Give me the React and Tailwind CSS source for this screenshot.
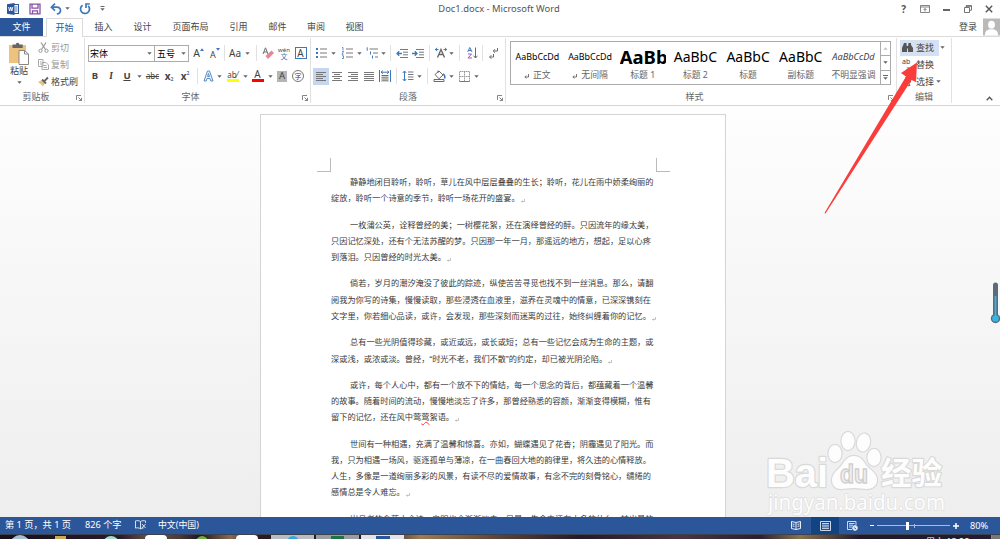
import clsx from "clsx";

const tabs = [
  { name: "插入", width: "w-[39px]" },
  { name: "设计", width: "w-[39px]" },
  { name: "页面布局", width: "w-[57px]" },
  { name: "引用", width: "w-[39px]" },
  { name: "邮件", width: "w-[39px]" },
  { name: "审阅", width: "w-[38px]" },
  { name: "视图", width: "w-[39px]" },
];

const styles = [
  { sample: "AaBbCcDd", name: "正文", mark: true, cls: "text-[8.9px] text-black" },
  { sample: "AaBbCcDd", name: "无间隔", mark: true, cls: "text-[8.9px] text-black" },
  { sample: "AaBb", name: "标题 1", cls: "text-[18.5px] font-bold text-black" },
  { sample: "AaBbC", name: "标题 2", cls: "text-[14px] text-black" },
  { sample: "AaBbC", name: "标题", cls: "text-[14px] text-black" },
  { sample: "AaBbC", name: "副标题", cls: "text-[14px] text-black" },
  { sample: "AaBbCcDd", name: "不明显强调", cls: "text-[9.2px] italic text-[#444]" },
];

const paragraphs = [
  [
    "静静地闭目聆听，聆听，草儿在风中层层叠叠的生长；聆听，花儿在雨中娇柔绚丽的",
    "绽放，聆听一个诗意的季节，聆听一场花开的盛宴。",
  ],
  [
    "一枚蒲公英，诠释曾经的美；一树樱花絮，还在演绎曾经的醉。只因流年的缘太美，",
    "只因记忆深处，还有个无法苏醒的梦。只因那一年一月，那遥远的地方，想起，足以心疼",
    "到落泪。只因曾经的时光太美。",
  ],
  [
    "倘若，岁月的潮汐淹没了彼此的踪迹，纵使苦苦寻觅也找不到一丝消息。那么，请翻",
    "阅我为你写的诗集，慢慢读取，那些浸透在血液里，滋养在灵魂中的情意，已深深镌刻在",
    "文字里，你若细心品读，或许，会发现，那些深刻而迷离的过往，始终纠缠着你的记忆。",
  ],
  [
    "总有一些光阴值得珍藏，或近或远，或长或短；总有一些记忆会成为生命的主题，或",
    "深或浅，或浓或淡。曾经，“时光不老，我们不散”的约定，却已被光阴沦陷。",
  ],
  [
    "或许，每个人心中，都有一个放不下的情结，每一个思念的背后，都蕴藏着一个温馨",
    "的故事。随着时间的流动，慢慢地淡忘了许多，那曾经熟悉的容颜，渐渐变得模糊，惟有",
    "留下的记忆，还在风中莺莺絮语。",
  ],
  [
    "世间有一种相遇，充满了温馨和惊喜。亦如，蝴蝶遇见了花香；阴霾遇见了阳光。而",
    "我，只为相遇一场风，驱逐孤单与薄凉，在一曲春回大地的韵律里，将久违的心情释放。",
    "人生，多像是一道绚丽多彩的风景，有读不尽的爱情故事，有念不完的刻骨铭心，缱绻的",
    "感情总是令人难忘。",
  ],
  ["岁月老的念落土会诗，自明也会渐渐淡去，只是，生命中还有太多的什么，转出最的"],
];

const Caret = ({ className = "" }) => (
  <svg viewBox="0 0 5 3" className={clsx("h-[3px] w-[5px] shrink-0", className)}>
    <path d="M0.3 0.2h4.4L2.5 2.8z" fill="#666" />
  </svg>
);

// one slot of a ribbon row, the glyph sits in the middle
const Cell = ({ w, className, children }) => (
  <div className={clsx("flex h-full shrink-0 items-center justify-center", w, className)}>
    {children}
  </div>
);

const Sep = ({ w }) => (
  <Cell w={w}>
    <div className="h-4 w-px bg-[#e1e1e1]" />
  </Cell>
);

const Icon = ({ w = 13, h = 13, children }) => (
  <svg
    width={w}
    height={h}
    viewBox={`0 0 ${w} ${h}`}
    fill="none"
    stroke="#6a6a6a"
    className="shrink-0"
  >
    {children}
  </svg>
);

const Group = ({ w, label, launcher, children }) => (
  <div className={clsx("flex h-full shrink-0 flex-col border-r border-[#e1e1e1]", w)}>
    <div className="h-[53px]">{children}</div>
    <div className="relative flex h-[13px] items-center justify-center text-[#666]">
      {label}
      {launcher && (
        <svg viewBox="0 0 6 6" className="absolute right-[2px] top-[5px] h-[6px] w-[6px]" fill="none" stroke="#777">
          <path d="M0.5 5V0.5H5M2.5 2.5l3 3M5.5 2.8v2.7H2.8" strokeWidth="0.9" />
        </svg>
      )}
    </div>
  </div>
);

const Lines = ({ rows }) => (
  <Icon w={12} h={11}>
    {rows.map(([x, len], i) => (
      <path key={i} d={`M${x} ${1.5 + i * 2}h${len}`} strokeWidth="0.9" />
    ))}
  </Icon>
);

const TitleBar = () => (
  <div className="flex h-[18px] items-center pb-px text-[#555]">
    <div className="flex w-[300px] items-center pl-[7px]">
      <svg width="12" height="12" viewBox="0 0 12 12">
        <rect x="6" y="1.5" width="5.5" height="9" fill="#fff" stroke="#2b579a" />
        <path d="M8 4h2.5M8 6h2.5M8 8h2.5" stroke="#2b579a" strokeWidth="0.8" />
        <path d="M0 1.3L7.5 0v12L0 10.7z" fill="#2b579a" />
        <path d="M1.6 4l1 4 1.1-4 1.1 4 1-4" fill="none" stroke="#fff" strokeWidth="0.9" />
      </svg>
      <svg width="12" height="12" viewBox="0 0 12 12" className="ml-[10px]" fill="none" stroke="#8a50a8" strokeWidth="1.3">
        <path d="M1 1.2h10v9.6H1zM3 1.2v4h6v-4M3.5 10.5V7.8h5v2.7" />
      </svg>
      <svg width="12" height="12" viewBox="0 0 12 12" className="ml-[9px]" fill="none" stroke="#3e78b8" strokeWidth="1.7">
        <path d="M5 0.7L1.4 4.2 5 7.6M1.6 4.2h5.2c5 .2 4.8 6.4 0 6.8" />
      </svg>
      <Caret className="ml-[3px]" />
      <svg width="12" height="12" viewBox="0 0 12 12" className="ml-[9px]" fill="none" stroke="#3e78b8" strokeWidth="1.7">
        <path d="M3.6 2.2a4.5 4.5 0 1 0 5.6.6M10.8 1H7v4" />
      </svg>
      <svg width="5" height="5" viewBox="0 0 5 5" className="ml-[9px]">
        <path d="M0.5 0.5h4" stroke="#666" />
        <path d="M0.3 2.2h4.4L2.5 4.8z" fill="#666" />
      </svg>
    </div>
    <div className="w-[398px] text-center text-[9.4px]">Doc1.docx - Microsoft Word</div>
    <div className="flex flex-1 items-center justify-end pr-[7px]">
      <span className="text-[10px] font-bold">?</span>
      <svg width="10" height="8" viewBox="0 0 10 8" className="ml-[14px]" fill="none" stroke="#666">
        <path d="M.5.5h9v7h-9zM.5 2h9M5 6.5v-3M3.5 5L5 3.5 6.500 5" strokeWidth="0.8" />
      </svg>
      <div className="ml-[13px] mt-[3px] h-[1.500px] w-[7px] bg-[#666]" />
      <svg width="8" height="8" viewBox="0 0 8 8" className="ml-[14px]" fill="none" stroke="#666">
        <path d="M.5 2.500h5v5h-5zM2.200 2.200V.6h5.300v4.600H5.800M2 1.300h5.500" strokeWidth="0.9" />
      </svg>
      <svg width="8" height="8" viewBox="0 0 8 8" className="ml-[13px]" stroke="#555" strokeWidth="1.4">
        <path d="M.8.8l6.400 6.400M7.200.8L.8 7.200" />
      </svg>
    </div>
  </div>
);

const TabRow = () => (
  <div className="flex h-[19px] border-b border-[#dadada] text-[#444]">
    <div className="flex w-[43px] items-center justify-center bg-[#2b579a] pb-px text-white">文件</div>
    <div className="ml-[3px] -mb-px flex w-[37px] items-center justify-center border border-b-0 border-[#dadada] bg-white pb-[2px] text-[#2b579a]">
      开始
    </div>
    <div className="ml-px flex pb-px">
      {tabs.map((tab) => (
        <div key={tab.name} className={clsx("flex items-center justify-center", tab.width)}>
          {tab.name}
        </div>
      ))}
    </div>
    <div className="ml-auto flex items-center">
      <span className="mb-[2px]">登录</span>
      <svg width="17" height="18" viewBox="0 0 18 18" className="ml-[6px]">
        <rect width="18" height="18" fill="#b9b9b9" />
        <ellipse cx="9" cy="6.500" rx="3.600" ry="4.200" fill="#fff" />
        <path d="M2 18c0-5 3-6.500 7-6.500s7 1.500 7 6.500z" fill="#fff" />
      </svg>
    </div>
  </div>
);

const Clipboard = () => (
  <Group w="w-[85px]" label={<span className="mr-[12px]">剪贴板</span>} launcher>
    <div className="flex h-full">
      <div className="flex w-[38px] flex-col items-center pt-[4px]">
        <svg width="22" height="23" viewBox="0 0 22 23">
          <rect x="1" y="3" width="17" height="18" fill="#ecc27c" />
          <path d="M4.500 2.500h3.300a1.800 1.800 0 0 1 3.600 0h3.300V6H4.500z" fill="#666" />
          <path d="M11 8.500h5.500L20.500 12v10.500H11z" fill="#fff" stroke="#888" />
          <path d="M16.500 8.500V12h4" fill="none" stroke="#888" />
        </svg>
        <span className="leading-[12px]">粘贴</span>
        <Caret className="mt-[4px]" />
      </div>
      <div className="flex flex-col pt-px text-[#999]">
        <div className="flex h-[17px] items-center">
          <Icon w={11} h={11}>
            <path d="M3 .5l4.500 7M8 .5l-4.500 7" stroke="#999" strokeWidth="1.200" />
            <circle cx="2.500" cy="8.800" r="1.600" stroke="#999" />
            <circle cx="8.500" cy="8.800" r="1.600" stroke="#999" />
          </Icon>
          <span className="ml-[2px]">剪切</span>
        </div>
        <div className="flex h-[17px] items-center">
          <Icon w={11} h={11}>
            <path d="M.5.500h4.500v7H.5zM4 3.500h4L10.500 6v4.500H4z" fill="#fff" stroke="#aaa" />
            <path d="M5.500 6.500h3M5.500 8.500h3.500M2 3h1.500M2 5h1.500" stroke="#aaa" />
          </Icon>
          <span className="ml-[2px]">复制</span>
        </div>
        <div className="flex h-[17px] items-center text-[#444]">
          <Icon w={11} h={11}>
            <path d="M0 6l4-2 3 3-2 3.500c-1-1.500-3-3-5-4.500z" fill="#ecc27c" stroke="none" />
            <path d="M4 3.500l4 4M6.500 5L10 1.500" stroke="#666" strokeWidth="1.800" />
          </Icon>
          <span className="ml-[2px]">格式刷</span>
        </div>
      </div>
    </div>
  </Group>
);

const FontGroup = () => (
  <Group w="w-[226px]" label={<span className="mr-[14px]">字体</span>} launcher>
    <div className="flex h-[26px] items-center pl-[3px] pt-[4px]">
      <div className="flex h-[17px] w-[67px] items-center justify-between border border-[#ababab] pl-px pr-[2px] text-black">
        宋体 <Caret />
      </div>
      <div className="-ml-px flex h-[17px] w-[35px] items-center justify-between border border-[#ababab] pl-[2px] pr-[2px] text-black">
        五号 <Caret />
      </div>
      <Cell w="w-[17px]" className="ml-px">
        <span className="text-[10.500px]">A</span>
        <svg width="4" height="3" viewBox="0 0 4 3" className="mb-[8px]">
          <path d="M0 3h4L2 .3z" fill="#3e78b8" />
        </svg>
      </Cell>
      <Cell w="w-[16px]">
        <span className="mt-[2px] text-[9px]">A</span>
        <svg width="4" height="3" viewBox="0 0 4 3" className="mb-[8px]">
          <path d="M0 0h4L2 2.700z" fill="#3e78b8" />
        </svg>
      </Cell>
      <Sep w="w-[3px]" />
      <Cell w="w-[18px]" className="text-[10px]">Aa</Cell>
      <Cell w="w-[6px]"><Caret /></Cell>
      <Sep w="w-[12px]" />
      <Cell w="w-[12px]">
        <Icon w={12} h={12}>
          <path d="M1 7L3.500.8 6 7M2 5h3" />
          <path d="M3.500 9l6-5.500L12 6l-6 6z" fill="#e8849c" stroke="none" />
        </Icon>
      </Cell>
      <Cell w="w-[20px]">
        <div className="flex flex-col items-center">
          <span className="text-[6px] leading-[6px]">wén</span>
          <span className="text-[7px] leading-[7px] text-[#3e78b8]">文</span>
        </div>
      </Cell>
      <Cell w="w-[13px]">
        <div className="flex h-[12px] w-[12px] items-center justify-center border border-[#3e78b8] text-[10px]">A</div>
      </Cell>
    </div>
    <div className="mt-[2px] flex h-[20px] items-center pl-[2px]">
      <Cell w="w-[16px]" className="text-[9.500px] font-bold">B</Cell>
      <Cell w="w-[16px]" className="font-serif text-[10px] font-bold italic">I</Cell>
      <Cell w="w-[16px]" className="text-[9.500px] font-bold underline">U</Cell>
      <Cell w="w-[9px]"><Caret /></Cell>
      <Cell w="w-[17px]" className="text-[8px] line-through">abc</Cell>
      <Cell w="w-[16px]" className="text-[10px] font-bold">
        x<span className="mt-[6px] text-[5px] text-[#3e78b8]">2</span>
      </Cell>
      <Cell w="w-[16px]" className="text-[10px] font-bold">
        x<span className="mb-[6px] text-[5px] text-[#3e78b8]">2</span>
      </Cell>
      <Sep w="w-[8px]" />
      <Cell w="w-[14px]">
        <Icon w={11} h={12}>
          <path d="M1 11L4.500 1h2L10 11H7.800L7 8.500H4L3.200 11zM4.600 6.500h1.900L5.500 3.500z" stroke="#5b8fcb" fill="#eaf2fb" />
        </Icon>
      </Cell>
      <Cell w="w-[8px]"><Caret /></Cell>
      <Cell w="w-[19px]">
        <div className="w-[12px] border-b-[3px] border-[#ffff00] text-center text-[8px] leading-[8px]">ab⁄</div>
      </Cell>
      <Cell w="w-[6px]"><Caret /></Cell>
      <Cell w="w-[19px]">
        <div className="w-[12px] border-b-[3px] border-[#f00] text-center text-[10px] leading-[9px]">A</div>
      </Cell>
      <Cell w="w-[6px]"><Caret /></Cell>
      <Cell w="w-[18px]">
        <div className="flex h-[11px] w-[10px] items-center justify-center bg-[#b5b5b5] text-[9.500px]">A</div>
      </Cell>
      <Cell w="w-[14px]">
        <div className="flex h-[12px] w-[12px] items-center justify-center rounded-full border border-[#777] text-[7px]">字</div>
      </Cell>
    </div>
  </Group>
);

const ListIcon = ({ kind }) => (
  <Icon w={12} h={12}>
    {kind === "multi" ? (
      <>
        <path d="M3.500 2h8.500M7 6h5M9 10h3" strokeWidth="0.9" />
        <path d="M1.200.3v3.400M4.500 4.500v3M6.500 8.500v3" stroke="#3e78b8" />
      </>
    ) : (
      <>
        <path d="M5 2h7M5 6h7M5 10h7" strokeWidth="0.9" />
        {kind === "dots" && <path d="M1 2h2M1 6h2M1 10h2" stroke="#3e78b8" strokeWidth="2" />}
        {kind === "nums" && <path d="M1 .5h1v3M1 4.500h1.500L1 7.300h1.500M1 8.800h1.500v2.700H1" stroke="#3e78b8" strokeWidth="0.8" />}
      </>
    )}
  </Icon>
);

const Paragraph = () => (
  <Group w="w-[195px]" label="段落" launcher>
    <div className="flex h-[26px] items-center pl-[2px] pt-[4px]">
      <Cell w="w-[16px]"><ListIcon kind="dots" /></Cell>
      <Cell w="w-[9px]"><Caret /></Cell>
      <Cell w="w-[17px]"><ListIcon kind="nums" /></Cell>
      <Cell w="w-[8px]"><Caret /></Cell>
      <Cell w="w-[17px]"><ListIcon kind="multi" /></Cell>
      <Cell w="w-[6px]"><Caret /></Cell>
      <Sep w="w-[8px]" />
      <Cell w="w-[16px]">
        <Icon w={12} h={9}>
          <path d="M4 .5h8M7 3.200h5M7 5.800h5M4 8.500h8" strokeWidth="0.9" />
          <path d="M6 4.500H1M3.200 2.300L1 4.500l2.200 2.200" stroke="#3e78b8" strokeWidth="1.300" />
        </Icon>
      </Cell>
      <Cell w="w-[16px]">
        <Icon w={12} h={9}>
          <path d="M4 .5h8M7 3.200h5M7 5.800h5M4 8.500h8" strokeWidth="0.9" />
          <path d="M0 4.500h5M2.800 2.300L5 4.500 2.800 6.700" stroke="#3e78b8" strokeWidth="1.300" />
        </Icon>
      </Cell>
      <Sep w="w-[6px]" />
      <Cell w="w-[17px]">
        <Icon w={12} h={12}>
          <path d="M2.500 10.500L6 2.500l3.500 8M4 7.500h4" strokeWidth="1.400" />
          <path d="M0 2.500h3.500M2 .8L.5 2.500 2 4.200M12 2.500H8.500M10 .8l1.500 1.700L10 4.200" stroke="#3e78b8" />
        </Icon>
      </Cell>
      <Cell w="w-[5px]"><Caret /></Cell>
      <Sep w="w-[11px]" />
      <Cell w="w-[14px]">
        <Icon w={11} h={12}>
          <path d="M.7 5L2.800.5 5 5M1.500 3.500h2.600" stroke="#3e78b8" />
          <path d="M1 7h3.500L1 11h4" stroke="#9b5cb5" />
          <path d="M8.500.5v10.500M6.500 8.700l2 2.300 2-2.300" />
        </Icon>
      </Cell>
      <Sep w="w-[6px]" />
      <Cell w="w-[16px]">
        <Icon w={9} h={11}>
          <path d="M8.500 0v3H4.500M6 1.200L4.200 3 6 4.800M4.500 6v3H.8M2.300 7.200L.5 9l1.800 1.800" />
        </Icon>
      </Cell>
    </div>
    <div className="mt-[2px] flex h-[20px] items-center pl-[2px]">
      <Cell w="w-[16px]" className="bg-[#c5d6f0] !h-[17px]">
        <Lines rows={[[1, 10], [1, 7], [1, 10], [1, 7], [1, 10]]} />
      </Cell>
      <Cell w="w-[16px]"><Lines rows={[[1, 10], [3, 6], [1, 10], [3, 6], [1, 10]]} /></Cell>
      <Cell w="w-[16px]"><Lines rows={[[1, 10], [4, 7], [1, 10], [4, 7], [1, 10]]} /></Cell>
      <Cell w="w-[16px]"><Lines rows={[[1, 10], [1, 10], [1, 10], [1, 10], [1, 10]]} /></Cell>
      <Cell w="w-[16px]">
        <Icon w={12} h={12}>
          <path d="M.5 0v12M11.500 0v12M2 2.200h8M3.800.7L2 2.200l1.800 1.500M8.200.7L10 2.200 8.200 3.700" stroke="#3e78b8" />
          <path d="M2.500 5.500h7M2.500 7.200h7M2.500 9h7M2.500 10.800h7" />
        </Icon>
      </Cell>
      <Sep w="w-[6px]" />
      <Cell w="w-[17px]">
        <Icon w={12} h={12}>
          <path d="M2.500 1v10M.7 3l1.800-2 1.800 2M.7 9l1.800 2 1.800-2" stroke="#3e78b8" />
          <path d="M6 2h5.500M6 4.500h5.500M6 7h5.500M6 9.500h5.500" strokeWidth="0.9" />
        </Icon>
      </Cell>
      <Cell w="w-[6px]"><Caret /></Cell>
      <Sep w="w-[10px]" />
      <Cell w="w-[14px]">
        <Icon w={13} h={12}>
          <path d="M2 4.500L6 1l4 4-4 3.800zM5 3V.5" />
          <path d="M10 4c2 1 2 3 1.500 4.500" stroke="#3e78b8" strokeWidth="1.600" />
          <path d="M1 9.500h10v2H1z" />
        </Icon>
      </Cell>
      <Cell w="w-[10px]"><Caret /></Cell>
      <Cell w="w-[16px]">
        <Icon w={11} h={11}>
          <path d="M.5.5h10v10H.5zM5.500.5v10M.5 5.500h10" stroke="#999" strokeDasharray="1.500 0.5" />
          <path d="M.5 10.500h10" stroke="#777" />
        </Icon>
      </Cell>
      <Cell w="w-[8px]"><Caret /></Cell>
    </div>
  </Group>
);

const Styles = () => (
  <Group w="w-[391px]" label={<span className="mr-[13px]">样式</span>} launcher>
    <div className="flex pl-[4px] pt-[3px]">
      <div className="flex h-[44px] w-[381px] border border-[#ababab]">
        {styles.map((s, i) => (
          <div key={i} className="flex w-[52.7px] shrink-0 flex-col items-center overflow-hidden">
            <div
              className={clsx(
                "flex h-[30px] w-[46px] items-center overflow-hidden whitespace-nowrap",
                !s.sample.endsWith("Bb") && "justify-center",
                s.cls
              )}
            >
              {s.sample}
            </div>
            <div className="-mt-[4px] flex h-[14px] items-center whitespace-nowrap text-[8.800px] text-[#666]">
              {s.mark && (
                <svg width="5" height="5" viewBox="0 0 5 5" className="mr-[4px] mt-[2px]" fill="none" stroke="#666">
                  <path d="M4.500 0v3H1M2.300 1.500L.8 3l1.500 1.500" strokeWidth="0.9" />
                </svg>
              )}
              {s.name}
            </div>
          </div>
        ))}
        <div className="ml-auto flex w-[10px] flex-col divide-y divide-[#ababab] border-l border-[#ababab]">
          <div className="flex flex-1 items-center justify-center"><Caret className="rotate-180 opacity-40" /></div>
          <div className="flex flex-1 items-center justify-center"><Caret /></div>
          <div className="flex flex-1 flex-col items-center justify-center">
            <div className="mb-px h-px w-[5px] bg-[#666]" />
            <Caret />
          </div>
        </div>
      </div>
    </div>
  </Group>
);

const Editing = () => (
  <Group w="w-[55px]" label="编辑">
    <div className="flex flex-col pl-[3px] pt-px">
      <div className="flex h-[17px] items-center">
        <div className="flex h-[16px] w-[39px] items-center bg-[#d5e1f2] pl-[2px]">
          <Icon w={11} h={11}>
            <path d="M2 1h2.500v2L5 5v5H0V6zM6.500 1H9v2l2 3v4H6V5zM4.500 4h2v2.500h-2z" fill="#555" stroke="none" />
          </Icon>
          <span className="ml-[3px]">查找</span>
        </div>
        <Caret className="ml-px" />
      </div>
      <div className="flex h-[17px] items-center">
        <div className="ml-[2px] h-[14px] w-[12px] text-[7px] leading-[7px]">
          <div>ab</div>
          <div className="pl-[4px] text-[#3e78b8]">ac</div>
        </div>
        <span className="ml-[2px]">替换</span>
      </div>
      <div className="flex h-[17px] items-center">
        <div className="ml-[2px] w-[12px]">
          <Icon w={11} h={11}>
            <path d="M4 1l5 5H6.500l1.500 3.500-1.500.5L5 7 4 8z" fill="#fff" />
          </Icon>
        </div>
        <span className="ml-[2px]">选择</span>
        <Caret className="ml-[2px]" />
      </div>
    </div>
  </Group>
);

const Ribbon = () => (
  <div className="flex h-[69px] border-b border-[#d5d5d5] bg-white pb-[2px] pt-px text-[#444]">
    <Clipboard />
    <FontGroup />
    <Paragraph />
    <Styles />
    <Editing />
    <div className="flex flex-1 items-end justify-end pb-[2px] pr-[7px]">
      <svg width="7" height="5" viewBox="0 0 7 5" fill="none" stroke="#555" strokeWidth="1.300">
        <path d="M.7 4.300l2.800-3 2.800 3" />
      </svg>
    </div>
  </div>
);

const Document = () => (
  <div className="mt-[8px] h-[404px] w-[466px] shrink-0 overflow-hidden border border-b-0 border-[#d4d4d4] bg-white">
    <div className="flex h-[57px] items-end justify-between pl-[56px] pr-[55px]">
      <div className="h-[14px] w-[14px] border-b border-r border-[#bbb]" />
      <div className="h-[14px] w-[14px] border-b border-l border-[#bbb]" />
    </div>
    <div className="flex flex-col gap-[9.900px] pl-[70px] pt-[3.200px] font-['Liberation_Sans','Noto_Sans_CJK_SC',sans-serif] text-[8.210px] leading-[16.300px] text-[#3a3a3a]">
      {paragraphs.map((lines, i) => (
        <div key={i}>
          {lines.map((line, j) => (
            <div key={j} className={clsx("flex h-[16.300px] whitespace-nowrap", j === 0 && "pl-[19px]")}>
              {line.includes("莺莺") ? (
                <>
                  留下的记忆，还在风中莺
                  <span className="underline decoration-[#f33] decoration-wavy decoration-[0.7px] underline-offset-1">莺</span>
                  絮语。
                </>
              ) : (
                line
              )}
              {j === lines.length - 1 && i < 6 && (
                <svg width="4" height="4" viewBox="0 0 4 4" className="ml-px mt-[8px]" fill="none" stroke="#aaa">
                  <path d="M3.500 0v2.500H.5M1.500 1.500l-1 1 1 1" strokeWidth="0.7" />
                </svg>
              )}
            </div>
          ))}
        </div>
      ))}
    </div>
  </div>
);

const Watermark = () => (
  <svg className="absolute left-[760px] top-[425px] h-[92px] w-[195px]" viewBox="0 0 195 92">
    <g fill="#fdfdfd" stroke="#d9d9d9" strokeWidth="2.400" paintOrder="stroke" strokeLinejoin="round">
      <text x="6" y="61.500" fontSize="40" fontWeight="bold" textLength="62" lengthAdjust="spacingAndGlyphs" fontFamily="Liberation Sans, sans-serif">
        Bai
      </text>
      <ellipse cx="75" cy="28.500" rx="6.500" ry="8.500" />
      <ellipse cx="88" cy="16" rx="6.500" ry="9" />
      <ellipse cx="103.500" cy="17.500" rx="6.500" ry="9" transform="rotate(12 103.500 17.500)" />
      <ellipse cx="114" cy="32.500" rx="6.500" ry="8.500" />
      <path d="M94 31c6 0 9 4 12 9 4 5 11 8 11 15 0 6-5 9-10 9-4 0-8-1-13-1s-9 1-13 1c-5 0-9-3-9-9 0-7 6-10 10-15 3-5 6-9 12-9z" />
      <text x="121" y="59" fontSize="30.500" fontWeight="bold" textLength="61" lengthAdjust="spacingAndGlyphs" fontFamily="Noto Sans CJK SC, sans-serif">
        经验
      </text>
      <text x="8" y="85" fontSize="21.500" strokeWidth="1.400" stroke="#dedede" textLength="177" lengthAdjust="spacingAndGlyphs" fontFamily="Noto Sans, sans-serif">
        jingyan.baidu.com
      </text>
    </g>
    <text x="80" y="58" fontSize="25" fontWeight="bold" fill="#efefef" stroke="#cfcfcf" strokeWidth="1.400" textLength="28" lengthAdjust="spacingAndGlyphs" fontFamily="Liberation Sans, sans-serif">
      du
    </text>
  </svg>
);

const StatusBar = () => (
  <div className="flex h-[17px] items-center bg-[#2b579a] pb-px pl-[5px] text-white">
    <span className="w-[80px] whitespace-nowrap text-[9.200px]">第 1 页，共 1 页</span>
    <span className="w-[50px] text-[9.200px]">826 个字</span>
    <svg width="11" height="10" viewBox="0 0 11 10" fill="none" stroke="#fff" strokeWidth="0.8">
      <path d="M5.500 1.500C4 .5 2 .5.5.9v7.200c1.500-.4 3.500-.4 5 .7zM5.500 1.500C7 .5 9 .5 10.500.9v2M5.500 8.800c1-.6 2-.8 3-.8M7 4l3.500 4M10.500 4L7 8" />
    </svg>
    <span className="ml-[12px] text-[8.900px]">中文(中国)</span>
    <div className="-mb-px ml-auto flex h-[17px] items-center">
      <svg width="10" height="9" viewBox="0 0 10 9" fill="none" stroke="#fff" strokeWidth="0.9" className="mr-[10px]">
        <path d="M5 1.500L.5.5v7L5 8.500l4.500-1v-7zM5 1.500v7M1.500 3l2 .3M1.500 5l2 .3M8.500 3l-2 .3M8.500 5l-2 .3" />
      </svg>
      <div className="flex h-full w-[28px] items-center justify-center bg-[#124484]">
        <svg width="11" height="10" viewBox="0 0 11 10" fill="none" stroke="#dfe8f5" strokeWidth="0.9">
          <path d="M.5.5h10v9H.5zM2 2.500h7M2 4.200h7M2 5.900h7M2 7.600h7" />
        </svg>
      </div>
      <svg width="11" height="10" viewBox="0 0 11 10" fill="none" stroke="#dfe8f5" strokeWidth="0.9" className="ml-[8px]">
        <path d="M5 8.500H.5v-8h8.500V4M2 2.500h5.500M2 4.200h4M2 6h3" />
        <circle cx="8" cy="7" r="2.400" fill="#dfe8f5" />
        <path d="M7 6.500l2 1.500" stroke="#2b579a" />
      </svg>
      <div className="ml-[12px] h-[1.500px] w-[4px] bg-white" />
      <div className="ml-[3px] flex w-[73px] items-center">
        <div className="h-px w-[29px] bg-[#a9bcd9]" />
        <div className="h-[8px] w-[3px] bg-white" />
        <div className="h-px w-[5px] bg-[#a9bcd9]" />
        <div className="h-[4px] w-px bg-[#a9bcd9]" />
        <div className="h-px flex-1 bg-[#a9bcd9]" />
      </div>
      <svg width="6" height="6" viewBox="0 0 6 6" className="ml-[3px]" stroke="#fff" strokeWidth="1.500">
        <path d="M0 3h6M3 0v6" />
      </svg>
      <span className="ml-[11px] w-[30px] text-[9.200px]">80%</span>
    </div>
  </div>
);

const Taskbar = () => (
  <div className="relative flex h-[5px] overflow-hidden border-t border-[#3a4250] bg-[linear-gradient(90deg,#15101c_0%,#2a1a2c_12%,#6b5648_15%,#4a3a38_18%,#1c1622_20%,#8a6a50_23%,#2a1a20_26%,#2a1a20_38%,#9a7c58_42%,#5a4438_50%,#241a28_58%,#4a3440_68%,#2a2030_76%,#8a7250_80%,#201a2c_86%,#241c30_100%)]">
    <div className="ml-[10px] h-[12px] w-[20px] rounded-t-full bg-[#a9bfd0]" />
    <div className="ml-[25px] mt-px h-1 w-[11px] bg-[#c9a95c]" />
    <div className="ml-[37px] mt-px h-[12px] w-[16px] rounded-t-full bg-[#a5dcc4]" />
    <div className="ml-[26px] h-1 w-[22px] rounded-t bg-white" />
    <div className="ml-[29px] mt-px h-[12px] w-[12px] rounded-t-full bg-[#6fae3c]" />
    <div className="ml-[28px] h-1 w-[22px] rounded-t bg-white" />
    <div className="ml-[13px] flex h-1 w-[43px] justify-center bg-[#b9bcc0]">
      <div className="mt-px h-[12px] w-[12px] rounded-t-full bg-[#3aa5dc]" />
    </div>
    <div className="ml-[2px] flex h-1 w-[43px] justify-center bg-[#9a9ea0]">
      <div className="mt-px h-1 w-[13px] bg-[#207245]" />
    </div>
    <div className="ml-[2px] flex h-1 w-[43px] justify-center bg-[#e2e4ea]">
      <div className="mt-px h-1 w-[14px] bg-[#2b579a]" />
    </div>
    <span className="absolute left-[926px] top-[2px] text-[9px] leading-[9px] text-white">周六 13:28</span>
    <div className="ml-auto h-1 w-[9px] border-l border-[#888] bg-[#777]" />
  </div>
);

const App = () => {
  return (
    <div className="relative h-[539px] w-[1000px] overflow-hidden bg-white font-['Noto_Sans','Noto_Sans_CJK_SC',sans-serif] text-[9px] leading-none">
      <TitleBar />
      <TabRow />
      <Ribbon />
      <div className="flex h-[411px] justify-center overflow-hidden bg-[linear-gradient(#fefefe,#eeeeee)] pr-[14px]">
        <Document />
      </div>
      <StatusBar />
      <Taskbar />

      <Watermark />
      <svg className="absolute left-[820px] top-[58px] h-[160px] w-[104px]" viewBox="820 58 104 160">
        <path d="M917 62.500L901 73l5 3.500L824.500 213l1 .5L911.500 80l4.500 2z" fill="#f93d3b" />
      </svg>
      <svg className="absolute left-[990px] top-[281px] h-[43px] w-[10px]" viewBox="0 0 10 43">
        <rect x="3" y="1.500" width="5" height="36" rx="2.500" fill="#5b6b7a" />
        <circle cx="5.500" cy="37.500" r="4.700" fill="#5b6b7a" />
        <path d="M5.500 15v20" stroke="#35b4e6" strokeWidth="1.800" />
        <circle cx="5.500" cy="37.500" r="3.300" fill="#35b4e6" />
      </svg>
    </div>
  );
};

export default App;
